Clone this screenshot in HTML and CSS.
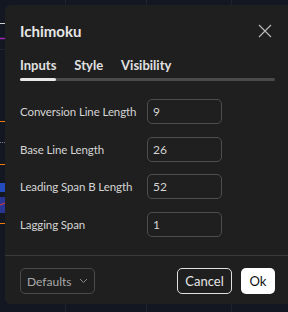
FILE: index.html
```html
<!DOCTYPE html>
<html lang="en">
<head>
    <meta charset="UTF-8">
    <meta name="viewport" content="width=device-width, initial-scale=1.0">
    <title>Ichimoku</title>
    <link rel="stylesheet" href="styles.css">
</head>
<body>

<div class="chart">
    <svg width="288" height="312" viewBox="0 0 288 312">
        <g stroke="#1f2330" stroke-width="1">
            <line x1="65.5" y1="0" x2="65.5" y2="312"/>
            <line x1="146.5" y1="0" x2="146.5" y2="312"/>
            <line x1="231.5" y1="0" x2="231.5" y2="312"/>
            <line x1="0" y1="49.5" x2="5" y2="49.5"/>
        </g>
        <line x1="0" y1="23.5" x2="5" y2="23.5" stroke="#d0d0d0"/>
        <line x1="0" y1="38.5" x2="5" y2="38.5" stroke="#9c27b0" stroke-width="1.5"/>
        <line x1="0" y1="121.5" x2="5" y2="121.5" stroke="#f57c00"/>
        <line x1="0" y1="142.5" x2="5" y2="142.5" stroke="#787b86" stroke-dasharray="1 1"/>
        <line x1="0" y1="164.5" x2="5" y2="164.5" stroke="#f57c00"/>
        <rect x="0" y="183" width="5" height="9" fill="#2962ff" opacity="0.7"/>
        <rect x="0" y="197" width="5" height="16" fill="#283593"/>
        <line x1="0" y1="205" x2="5" y2="203" stroke="#e53935"/>
        <line x1="0" y1="223.5" x2="5" y2="223.5" stroke="#f57c00"/>
    </svg>
</div>

<div class="dialog">
    <div class="dialog-header">
        <h2>Ichimoku</h2>
        <button class="close" type="button" aria-label="Close">
            <svg width="14" height="14" viewBox="0 0 14 14">
                <path d="M1 1L13 13M13 1L1 13" stroke="#b8b8b8" stroke-width="1.2" fill="none"/>
            </svg>
        </button>
    </div>

    <div class="tabs">
        <span class="tab active">Inputs</span>
        <span class="tab">Style</span>
        <span class="tab">Visibility</span>
    </div>
    <div class="tab-track"><div class="tab-thumb"></div></div>

    <div class="fields">
        <div class="field">
            <label for="conv">Conversion Line Length</label>
            <input type="text" id="conv" value="9">
        </div>
        <div class="field">
            <label for="base">Base Line Length</label>
            <input type="text" id="base" value="26">
        </div>
        <div class="field">
            <label for="spanb">Leading Span B Length</label>
            <input type="text" id="spanb" value="52">
        </div>
        <div class="field">
            <label for="lag">Lagging Span</label>
            <input type="text" id="lag" value="1">
        </div>
    </div>

    <div class="footer">
        <div class="defaults">
            <span>Defaults</span>
            <svg width="9" height="6" viewBox="0 0 9 6">
                <path d="M1 1L4.5 4.5L8 1" stroke="#8a8a8a" stroke-width="1" fill="none"/>
            </svg>
        </div>
        <div class="actions">
            <button class="btn btn-cancel" type="button">Cancel</button>
            <button class="btn btn-ok" type="button">Ok</button>
        </div>
    </div>
</div>

</body>
</html>
```
FILE: styles.css
```css
body {
    margin: 0;
    width: 288px;
    height: 312px;
    overflow: hidden;
    background: #131722;
    font-family: Lato, "Liberation Sans", sans-serif;
    position: relative;
}
.chart svg {
    display: block;
}
.dialog {
    position: absolute;
    left: 5px;
    top: 5px;
    width: 283px;
    height: 299px;
    box-sizing: border-box;
    background: #1f1f1f;
    border-radius: 6px 0 0 6px;
    padding: 0 13px 0 15px;
    display: flex;
    flex-direction: column;
}
.dialog-header {
    display: flex;
    justify-content: space-between;
    align-items: center;
    height: 50px;
}
.dialog-header h2 {
    margin: 0;
    font-size: 15px;
    font-weight: 700;
    color: #e6e6e6;
    padding-top: 2px;
}
.close {
    background: none;
    border: none;
    padding: 0;
    width: 14px;
    height: 14px;
    margin-right: 3px;
    margin-top: 2px;
    cursor: pointer;
}
.tabs {
    display: flex;
    gap: 18px;
    height: 20px;
    align-items: center;
}
.tab {
    font-size: 13px;
    font-weight: 700;
    color: #e0e0e0;
}
.tab-track {
    margin-top: 3px;
    height: 3px;
    border-radius: 2px;
    background: #4a4a4a;
}
.tab-thumb {
    width: 36px;
    height: 3px;
    border-radius: 2px;
    background: #e8e8e8;
}
.fields {
    padding-top: 18px;
    display: flex;
    flex-direction: column;
    gap: 12.5px;
}
.field {
    display: flex;
    align-items: center;
}
.field label {
    width: 127px;
    white-space: nowrap;
    font-size: 11.5px;
    letter-spacing: -0.1px;
    color: #d4d4d4;
}
.field input {
    width: 75px;
    height: 25px;
    box-sizing: border-box;
    padding: 0 5px;
    background: transparent;
    border: 1px solid #4e4e4e;
    border-radius: 5px;
    font-family: inherit;
    font-size: 12px;
    color: #d4d4d4;
}
.footer {
    margin-top: auto;
    margin-left: -15px;
    margin-right: -13px;
    padding: 12px 13px 10px 15px;
    border-top: 1px solid #3a3a3a;
    display: flex;
    justify-content: space-between;
    align-items: center;
}
.defaults {
    width: 75px;
    height: 26px;
    box-sizing: border-box;
    border: 1px solid #4a4a4a;
    border-radius: 5px;
    display: flex;
    align-items: center;
    justify-content: space-between;
    padding: 0 6px 0 6px;
    font-size: 12px;
    color: #a8a8a8;
}
.actions {
    display: flex;
    gap: 9px;
}
.btn {
    height: 26px;
    box-sizing: border-box;
    border-radius: 5px;
    font-family: inherit;
    font-size: 13px;
    cursor: pointer;
}
.btn-cancel {
    width: 55px;
    background: transparent;
    border: 1px solid #e0e0e0;
    color: #e6e6e6;
}
.btn-ok {
    width: 34px;
    background: #ffffff;
    border: none;
    color: #111111;
}
```
